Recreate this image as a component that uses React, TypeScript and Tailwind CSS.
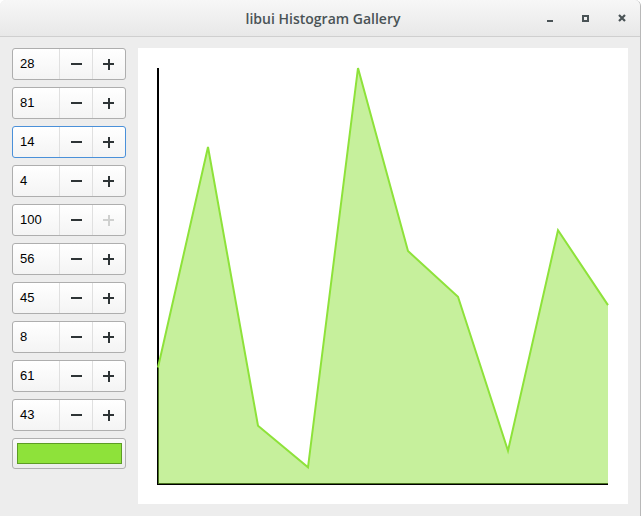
import React from "react";

const values = [28, 81, 14, 4, 100, 56, 45, 8, 61, 43];

function Spin({ value, focused, maxed }: { value: number; focused?: boolean; maxed?: boolean }) {
  return (
    <div
      className={`flex h-[32px] w-[114px] rounded-[3px] border bg-gradient-to-b from-white to-[#f4f4f4] ${
        focused ? "border-[#4a90d9]" : "border-[#aeaeae]"
      }`}
    >
      <div className="flex w-[46px] items-center pl-[7px] text-[13px] text-black">{value}</div>
      <div className="flex w-[33px] items-center justify-center border-l border-[#e0e0e0]">
        <div className="h-[2px] w-[11px] bg-[#2e3436]" />
      </div>
      <div className="relative flex flex-1 items-center justify-center border-l border-[#e0e0e0] pr-[1px]">
        <div className={`absolute h-[2px] w-[11px] ${maxed ? "bg-[#cfd0cf]" : "bg-[#2e3436]"}`} />
        <div className={`absolute h-[11px] w-[2px] ${maxed ? "bg-[#cfd0cf]" : "bg-[#2e3436]"}`} />
      </div>
    </div>
  );
}

function Chart() {
  const x0 = 20;
  const y0 = 436;
  const h = 416;
  const pts = values.map((v, i) => [x0 + i * 50, y0 - (v / 100) * h]);
  const line = pts.map((p) => p.join(",")).join(" ");
  const area = `${x0},${y0} ${line} ${x0 + 450},${y0}`;
  return (
    <svg width="490" height="456" className="block">
      <polyline points={`${x0},20 ${x0},${y0} ${x0 + 450},${y0}`} fill="none" stroke="#000" strokeWidth="2" />
      <polygon points={area} fill="rgba(142,226,57,0.5)" />
      <polyline points={line} fill="none" stroke="#8ee23a" strokeWidth="2" strokeLinejoin="miter" />
    </svg>
  );
}

export default function App() {
  return (
    <div
      className="flex h-[516px] w-[641px] flex-col overflow-hidden rounded-t-[6px] border-r border-[#b8b8b8] bg-[#ededed]"
      style={{ fontFamily: "'Liberation Sans', Arial, sans-serif" }}
    >
      <div className="relative flex h-[37px] shrink-0 items-center justify-center border-b border-[#cfcfcf] bg-gradient-to-b from-[#f7f7f7] to-[#e8e8e8]">
        <span
          className="pl-[6px] text-[14px] font-semibold text-[#4a5356]"
          style={{ fontFamily: "'Open Sans', 'DejaVu Sans', sans-serif" }}
        >
          libui Histogram Gallery
        </span>
        <div className="absolute right-[14px] top-0 flex h-full items-center gap-[29px]">
          <div className="mt-[6px] h-[2px] w-[6px] bg-[#4a5356]" />
          <div className="h-[7px] w-[7px] border-2 border-[#4a5356]" />
          <svg width="8" height="8" viewBox="0 0 8 8">
            <path d="M1 1 L7 7 M7 1 L1 7" stroke="#4a5356" strokeWidth="2.2" />
          </svg>
        </div>
      </div>
      <div className="flex gap-[12px] pl-[12px] pt-[11px]">
        <div className="flex flex-col gap-[7px]">
          {values.map((v, i) => (
            <Spin key={i} value={v} focused={i === 2} maxed={v === 100} />
          ))}
          <div className="flex h-[31px] w-[114px] items-center justify-center rounded-[3px] border border-[#b0b0b0] bg-gradient-to-b from-[#fafafa] to-[#ececec]">
            <div className="h-[21px] w-[105px] border border-[#5d9c25] bg-[#8ee23a]" />
          </div>
        </div>
        <div className="bg-white">
          <Chart />
        </div>
      </div>
    </div>
  );
}
